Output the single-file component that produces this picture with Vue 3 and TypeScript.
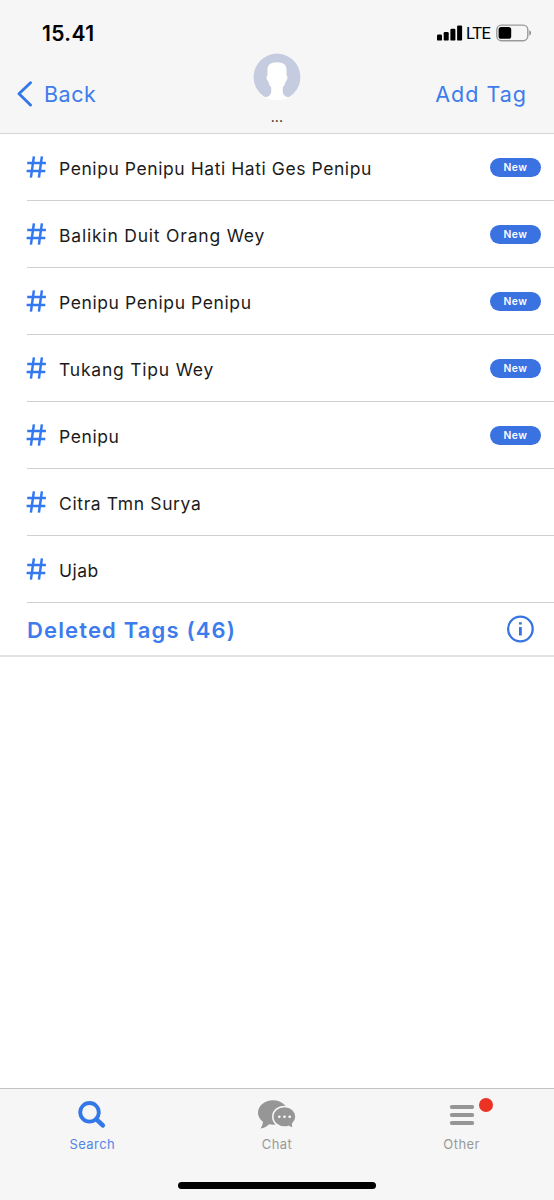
<script setup lang="ts">
interface Tag {
  label: string
  fresh: boolean
  tracking: number
}

const tags: Tag[] = [
  { label: 'Penipu Penipu Hati Hati Ges Penipu', fresh: true, tracking: 0.57 },
  { label: 'Balikin Duit Orang Wey', fresh: true, tracking: 0.8 },
  { label: 'Penipu Penipu Penipu', fresh: true, tracking: 0.6 },
  { label: 'Tukang Tipu Wey', fresh: true, tracking: 0.78 },
  { label: 'Penipu', fresh: true, tracking: 0.6 },
  { label: 'Citra Tmn Surya', fresh: false, tracking: 0.63 },
  { label: 'Ujab', fresh: false, tracking: 0.5 },
]
</script>

<template>
  <div class="screen">
    <header class="header">
      <div class="status">
        <span class="time">15.41</span>
        <div class="indicators">
          <svg class="signal" width="26" height="16" viewBox="0 0 26 16">
            <rect x="0" y="9.6" width="5" height="6" rx="1.2" />
            <rect x="6.7" y="7" width="5" height="8.6" rx="1.2" />
            <rect x="13.4" y="3.8" width="5" height="11.8" rx="1.2" />
            <rect x="20.1" y="0.4" width="5" height="15.2" rx="1.2" />
          </svg>
          <span class="network">LTE</span>
          <svg class="battery" width="36" height="18" viewBox="0 0 36 18">
            <rect x="0.8" y="1.1" width="31" height="15.6" rx="4.6" fill="none" stroke="#999" stroke-width="1.4" />
            <rect x="2.6" y="3" width="12.6" height="11.8" rx="2.6" fill="#000" />
            <path d="M33.3 6.2c2.2.8 2.2 4.6 0 5.4z" fill="#888" />
          </svg>
        </div>
      </div>
      <nav class="nav">
        <div class="back">
          <svg width="16" height="26" viewBox="0 0 16 26">
            <path d="M13.5 1.8L2 12.8L13.5 24" fill="none" stroke="#3478e8" stroke-width="2.9" stroke-linecap="round" stroke-linejoin="round" />
          </svg>
          <span>Back</span>
        </div>
        <div class="person">
          <svg width="48" height="48" viewBox="0 0 48 48">
            <circle cx="24" cy="24" r="23.4" fill="#c6cce0" />
            <path d="M24 9.200c7 0 9.700 2.800 9.600 8.300c0 1.800-.1 3.500-.1 5.100c1.500.2 1.100 4.800-.7 5.700c-.7 3-1.800 4.800-3 6.300v4.200c0 3 2.500 5.200 6.200 5.500c-6.900 4.300-17.100 4.300-24 0c3.700-.3 6.200-2.500 6.200-5.500v-4.200c-1.200-1.500-2.300-3.300-3-6.300c-1.800-.9-2.200-5.500-.7-5.700c0-1.600-.1-3.300-.1-5.100c-.1-5.500 2.600-8.300 9.600-8.300z" fill="#fff" />
          </svg>
          <span class="name">...</span>
        </div>
        <span class="add">Add Tag</span>
      </nav>
    </header>

    <main class="content">
      <ul class="tags">
        <li v-for="tag in tags" :key="tag.label" class="tag">
          <svg class="hash" width="20" height="22" viewBox="0 0 20 22">
            <path d="M7.900.4L4.900 21.700M15.900.4L12.900 21.700M1.200 7H19.900M.6 15.100H19.300" fill="none" stroke="#3478f0" stroke-width="2.500" />
          </svg>
          <span class="label" :style="{ letterSpacing: tag.tracking + 'px' }">{{ tag.label }}</span>
          <span v-if="tag.fresh" class="badge">New</span>
        </li>
      </ul>
      <div class="deleted">
        <span>Deleted Tags (46)</span>
        <svg width="28" height="28" viewBox="0 0 28 28">
          <circle cx="14.400" cy="14" r="12.300" fill="none" stroke="#3873e2" stroke-width="2.300" />
          <path d="M14.400 12V20.500M14.400 7.300V9.600" fill="none" stroke="#3873e2" stroke-width="2.800" />
        </svg>
      </div>
    </main>

    <footer class="tabs">
      <div class="tab active">
        <svg width="30" height="30" viewBox="0 0 30 30">
          <circle cx="12.500" cy="12.300" r="9.300" fill="none" stroke="#3478e8" stroke-width="3.800" />
          <path d="M19.500 19.300L25.800 25.400" stroke="#3478e8" stroke-width="4.600" stroke-linecap="round" />
        </svg>
        <span>Search</span>
      </div>
      <div class="tab">
        <svg width="40" height="30" viewBox="0 0 40 30">
          <path d="M16 .2C7.500.2 1 5.800 1 12.800c0 3.800 2 6.800 4.900 9c0 2.800-1.200 5-2.400 6.700c3.800-.3 6.600-2 8.500-4.200c1.300.3 2.700.4 4 .4C24.500 24.700 31 19.800 31 12.800S24.500.2 16 .2z" fill="#969696" />
          <path d="M27.500 6.500c-6.500 0-11.700 4.500-11.700 10.300s5.200 10.300 11.700 10.300c1.500 0 2.900-.2 4.100-.7c1.500 1.200 3.300 1.900 5.300 2c-.9-1.300-1.300-2.900-1.300-4.600c2.100-1.800 3.400-4.200 3.400-7c0-5.800-5-10.300-11.500-10.300z" fill="#969696" stroke="#f6f6f6" stroke-width="1.600" />
          <g fill="#fff">
            <circle cx="22.300" cy="16.800" r="1.300" />
            <circle cx="27.500" cy="16.800" r="1.300" />
            <circle cx="32.700" cy="16.800" r="1.300" />
          </g>
        </svg>
        <span>Chat</span>
      </div>
      <div class="tab">
        <div class="menu">
          <svg width="26" height="30" viewBox="0 0 26 30">
            <path d="M2.800 7H23.200M2.800 15H23.200M2.800 23H23.200" stroke="#969696" stroke-width="4" stroke-linecap="round" />
          </svg>
          <i class="alert"></i>
        </div>
        <span>Other</span>
      </div>
      <div class="home"></div>
    </footer>
  </div>
</template>

<style>
body {
  margin: 0;
  background: #fff;
}
</style>

<style scoped>
.screen {
  width: 554px;
  height: 1200px;
  display: flex;
  flex-direction: column;
  background: #fff;
  color: #1b1b1b;
  font-family: Inter, "Liberation Sans", sans-serif;
}
.header {
  box-sizing: border-box;
  height: 134px;
  background: #f6f6f6;
  border-bottom: 1px solid #d5d5d5;
}
.status {
  height: 54px;
  box-sizing: border-box;
  padding: 12px 22px 0 42px;
  display: flex;
  justify-content: space-between;
}
.time {
  font-size: 21px;
  line-height: 44px;
  font-weight: 600;
  color: #000;
  letter-spacing: 0.4px;
}
.indicators {
  height: 42px;
  display: flex;
  align-items: center;
}
.network {
  width: 30px;
  font-family: Roboto, "Liberation Sans", sans-serif;
  font-size: 16.5px;
  line-height: 20px;
  padding-top: 2px;
  font-weight: 400;
  color: #000;
  letter-spacing: -0.5px;
  margin-left: 3px;
}
.nav {
  display: grid;
  grid-template-columns: 1fr 48px 1fr;
  height: 79px;
  color: #3d7cec;
  font-size: 21.5px;
}
.back {
  display: flex;
  align-items: center;
  gap: 11px;
  height: 80px;
  padding-left: 17px;
  letter-spacing: 0.5px;
}
.person {
  display: flex;
  flex-direction: column;
  align-items: center;
  margin-top: -1px;
}
.name {
  color: #111;
  font-size: 14px;
  line-height: 20px;
  margin-top: 6px;
  letter-spacing: 0.2px;
}
.add {
  line-height: 80px;
  text-align: right;
  padding-right: 27px;
  letter-spacing: 1px;
}
.content {
  flex: 1;
}
.tags {
  list-style: none;
  margin: 0;
  padding: 0 0 0 27px;
}
.tag {
  box-sizing: border-box;
  height: 67px;
  display: flex;
  align-items: center;
  padding-right: 13px;
  border-bottom: 1px solid #d0d0d0;
}
.hash {
  margin-left: -1px;
}
.label {
  flex: 1;
  margin-left: 13px;
  padding-top: 3px;
  font-size: 17.5px;
}
.badge {
  width: 51px;
  height: 19px;
  border-radius: 10px;
  background: #3a72e2;
  color: #fff;
  font-size: 10.3px;
  font-weight: 600;
  line-height: 19px;
  letter-spacing: 0.6px;
  text-align: center;
}
.deleted {
  height: 52px;
  display: flex;
  align-items: center;
  justify-content: space-between;
  padding: 0 20px 0 27px;
  border-bottom: 2px solid #e2e2e2;
  color: #3d7cec;
  font-size: 22px;
  font-weight: 600;
  letter-spacing: 1.15px;
}
.deleted span {
  padding-top: 1px;
}
.tabs {
  box-sizing: border-box;
  height: 112px;
  display: grid;
  grid-template-columns: repeat(3, 1fr);
  grid-template-rows: 95px 5px;
  border-top: 1px solid #c2c2c2;
  background: #f6f6f6;
}
.tab {
  display: flex;
  flex-direction: column;
  align-items: center;
  padding-top: 11px;
  color: #999;
  font-size: 13px;
  line-height: 16px;
  letter-spacing: 0.45px;
}
.tab > span {
  margin-top: 6px;
}
.active {
  color: #5585e4;
}
.menu {
  position: relative;
  height: 30px;
}
.alert {
  position: absolute;
  left: 30px;
  top: -2px;
  width: 14px;
  height: 14px;
  border-radius: 50%;
  background: #ec3223;
}
.home {
  grid-column: 1 / 4;
  justify-self: center;
  width: 198px;
  height: 7px;
  margin-top: -2px;
  border-radius: 4px;
  background: #000;
}
</style>
